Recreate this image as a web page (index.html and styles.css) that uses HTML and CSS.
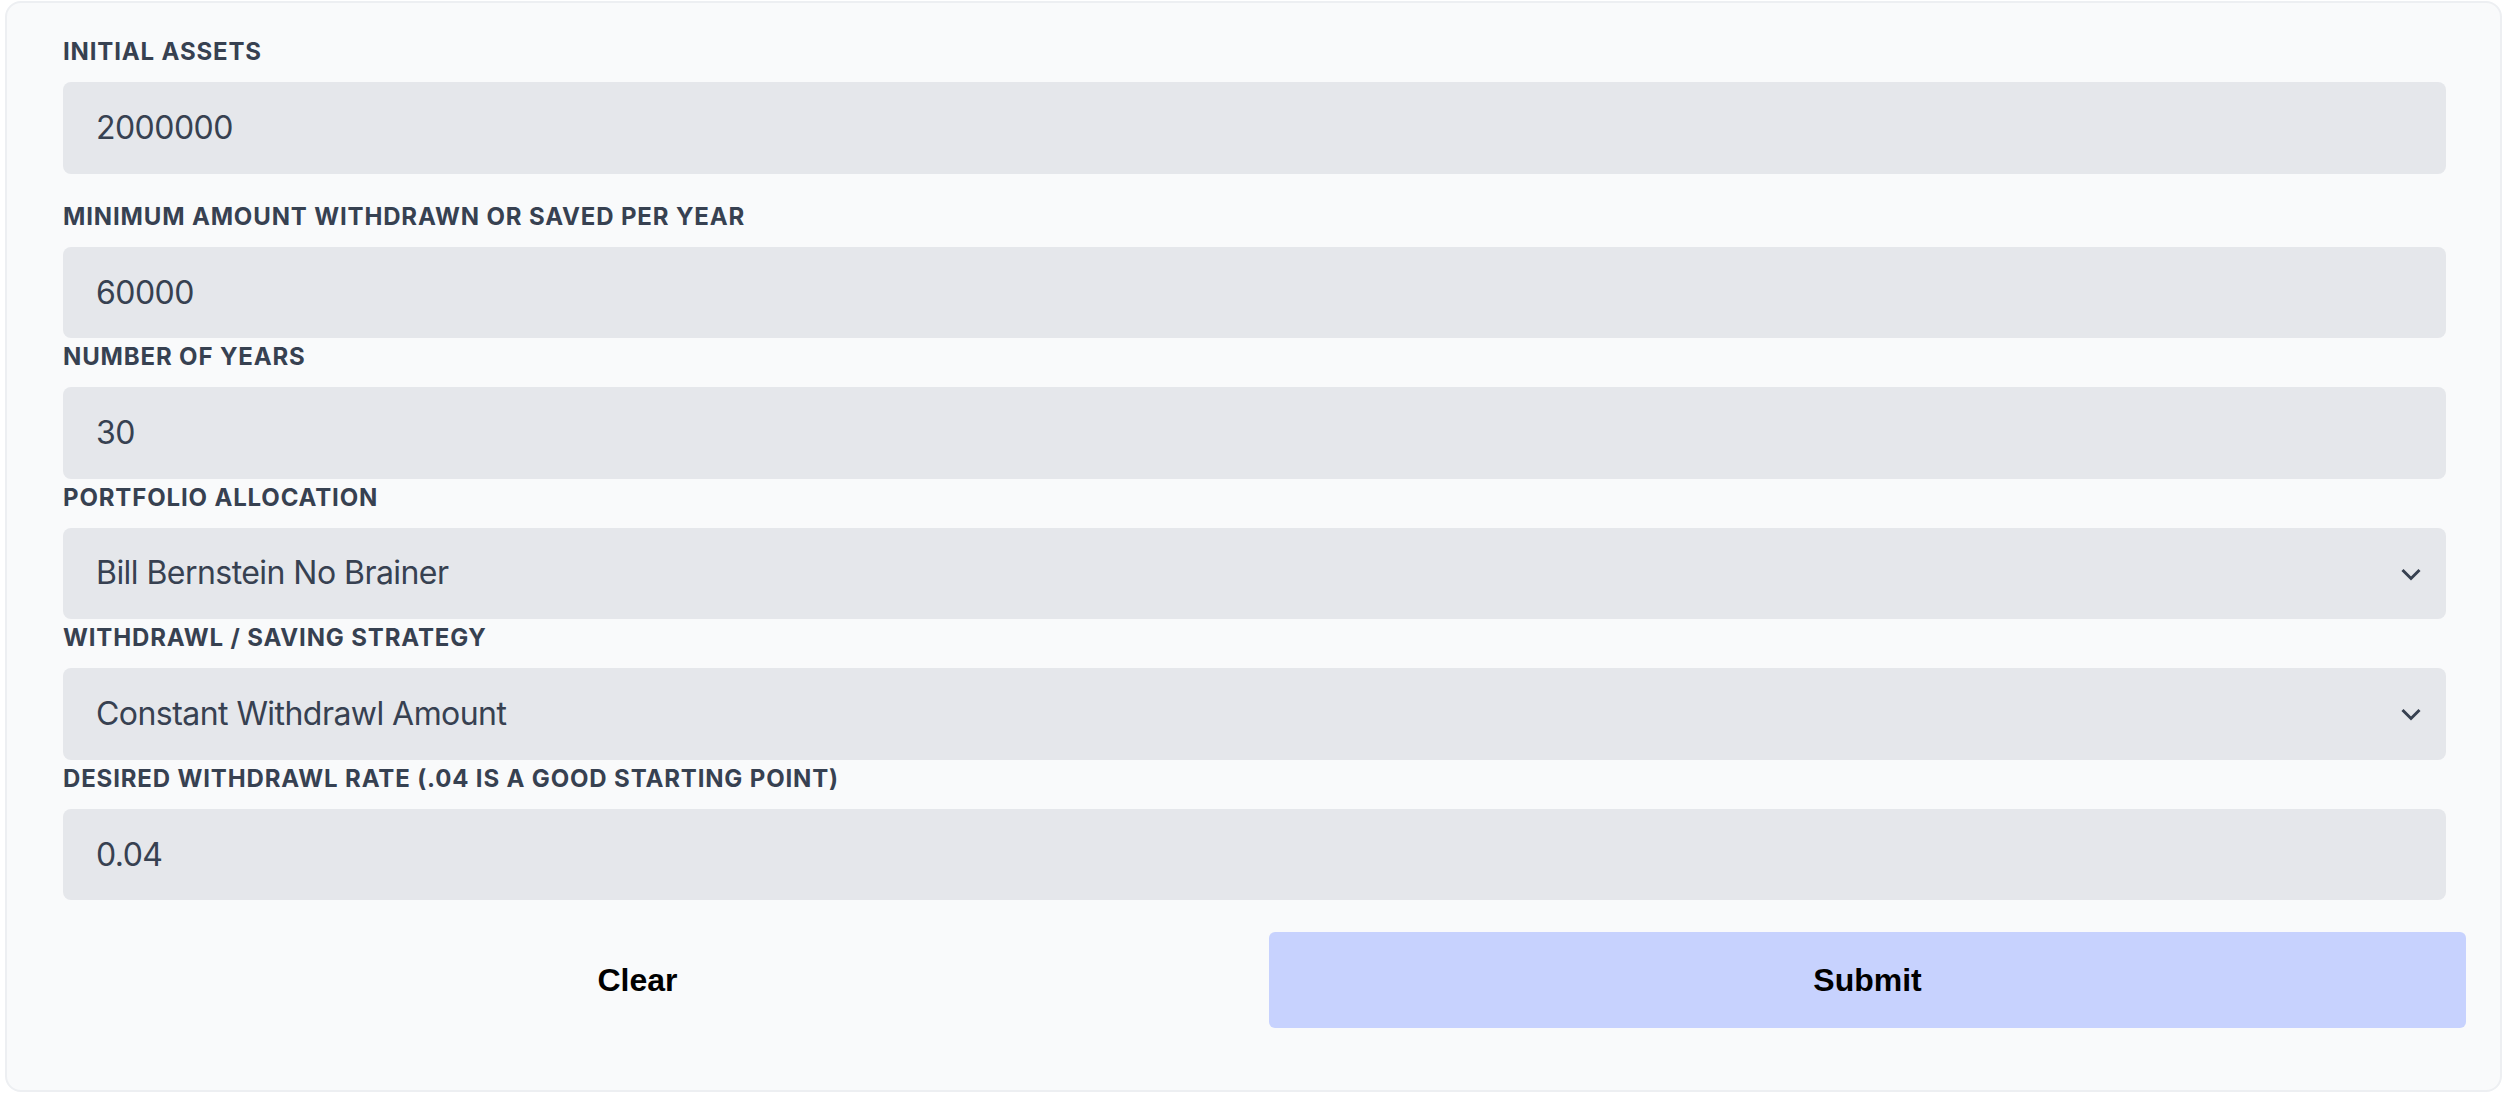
FILE: index.html
```html
<!DOCTYPE html>
<html lang="en">
<head>
<meta charset="utf-8">
<title>Withdrawal Simulator</title>
<link rel="stylesheet" href="styles.css">
</head>
<body>
<form class="card">
  <div class="field field-first">
    <label class="label" for="assets">Initial Assets</label>
    <input class="control" id="assets" type="text" value="2000000">
  </div>
  <div class="field">
    <label class="label" for="minimum">Minimum Amount Withdrawn or Saved Per Year</label>
    <input class="control" id="minimum" type="text" value="60000">
  </div>
  <div class="field">
    <label class="label" for="years">Number of Years</label>
    <input class="control" id="years" type="text" value="30">
  </div>
  <div class="field">
    <label class="label" for="portfolio">Portfolio Allocation</label>
    <div class="select-wrap">
      <select class="control select" id="portfolio">
        <option>Bill Bernstein No Brainer</option>
      </select>
      <svg class="chevron" width="20" height="13" viewBox="0 0 20 13" aria-hidden="true"><path d="M1.5 2 L10 10.5 L18.5 2" fill="none" stroke="#374151" stroke-width="3"/></svg>
    </div>
  </div>
  <div class="field">
    <label class="label" for="strategy">Withdrawl / Saving Strategy</label>
    <div class="select-wrap">
      <select class="control select" id="strategy">
        <option>Constant Withdrawl Amount</option>
      </select>
      <svg class="chevron" width="20" height="13" viewBox="0 0 20 13" aria-hidden="true"><path d="M1.5 2 L10 10.5 L18.5 2" fill="none" stroke="#374151" stroke-width="3"/></svg>
    </div>
  </div>
  <div class="field">
    <label class="label" for="rate">Desired Withdrawl Rate (.04 is a good starting point)</label>
    <input class="control" id="rate" type="text" value="0.04">
  </div>
  <div class="actions">
    <button class="btn btn-clear" type="button">Clear</button>
    <button class="btn btn-submit" type="button">Submit</button>
  </div>
</form>
</body>
</html>
```

FILE: styles.css
```css
html, body {
  background: #ffffff;
}
body {
  margin: 1px 4px 2px 5px;
  font-family: Inter, "Noto Sans", sans-serif;
}
.card {
  box-sizing: border-box;
  height: 1091px;
  border: 2px solid #edeff2;
  border-radius: 16px;
  background: #f9fafb;
  padding: 33px 54px 0 56px;
}
.field {
  display: flex;
  flex-direction: column;
  margin-bottom: 3px;
}
.field-first {
  margin-bottom: 27px;
}
.label {
  display: block;
  font-size: 24px;
  line-height: 32px;
  font-weight: 700;
  letter-spacing: 0.85px;
  text-transform: uppercase;
  color: #374151;
  margin-bottom: 14px;
}
.control {
  box-sizing: border-box;
  display: block;
  width: 100%;
  height: 91.5px;
  margin: 0;
  padding: 0 33px;
  border: 0;
  border-radius: 8px;
  background: #e5e7eb;
  color: #374151;
  font-family: Inter, "Noto Sans", sans-serif;
  font-size: 32px;
  line-height: 48px;
  letter-spacing: -0.55px;
  outline: none;
}
.select-wrap {
  position: relative;
}
.select {
  appearance: none;
  -webkit-appearance: none;
}
.chevron {
  position: absolute;
  right: 25px;
  top: 40px;
  pointer-events: none;
}
.actions {
  display: flex;
  gap: 33px;
  margin: 32px -20px 0 -24px;
}
.btn {
  flex: 1 1 0;
  height: 96px;
  border: 0;
  border-radius: 6px;
  font-family: "Liberation Sans", Arial, sans-serif;
  font-size: 32px;
  font-weight: 700;
  color: #000000;
  cursor: pointer;
}
.btn-clear {
  background: transparent;
}
.btn-submit {
  background: #c7d2fe;
}
```
